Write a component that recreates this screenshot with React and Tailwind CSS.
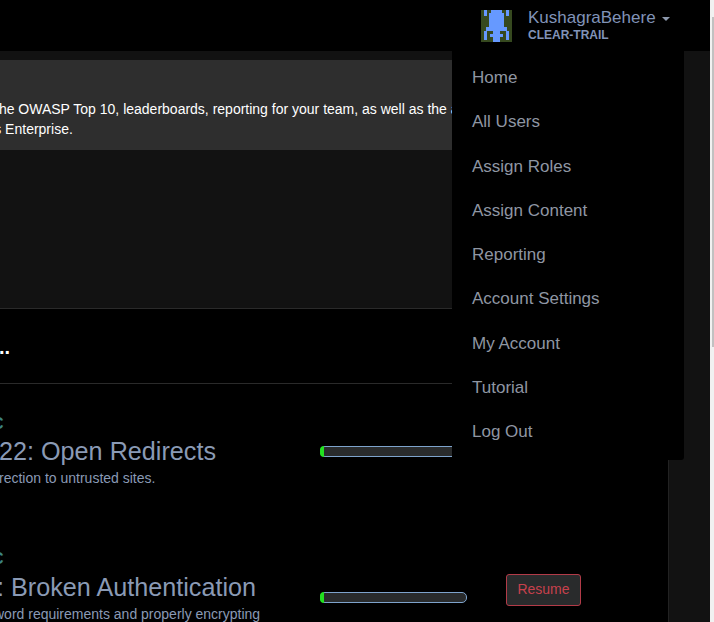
import React from 'react';

const menuItems = ['Home', 'All Users', 'Assign Roles', 'Assign Content', 'Reporting', 'Account Settings', 'My Account', 'Tutorial', 'Log Out'];

const Avatar = () => (
  <svg width="31" height="32" viewBox="0 0 31 32" shapeRendering="crispEdges">
    <rect width="31" height="32" fill="#36491f" />
    <g fill="#6699ff">
      <rect x="3" y="0" width="3" height="6" />
      <rect x="25" y="0" width="3" height="6" />
      <rect x="10" y="0" width="11" height="3" />
      <rect x="8" y="3" width="15" height="14" />
      <rect x="5" y="17" width="21" height="4" />
      <rect x="12" y="21" width="7" height="11" />
      <rect x="3" y="21" width="3" height="9" />
      <rect x="25" y="21" width="3" height="9" />
      <rect x="9" y="24" width="13" height="3" />
    </g>
  </svg>
);

const ProgressBar = () => (
  <div className="relative h-[11px] w-[147px] rounded-[5px] border border-[#7ea3cc] bg-[#292b2c]">
    <div className="absolute -bottom-px -left-px -top-px w-[4px] rounded-l-[5px] bg-[#22e01f]" />
  </div>
);

const Row = ({ title, desc, titleClass, descMl, barMt, button }) => (
  <div className="flex h-[135px] shrink-0 items-start overflow-hidden">
    <div className="w-[320px] shrink-0 overflow-hidden whitespace-nowrap pt-[32px]">
      <div className="-ml-[8px] h-[16px] text-[16px] font-bold leading-[16px] text-[#3c8583]">C</div>
      <div className={`text-[25.2px] leading-[36px] text-[#8a9ab5] ${titleClass}`}>{title}</div>
      <div className={`text-[14px] leading-[18px] text-[#8a9ab5] ${descMl}`}>{desc}</div>
    </div>
    <div className={`shrink-0 ${barMt}`}>
      <ProgressBar />
    </div>
    {button && (
      <button className="ml-[39px] mt-[55px] h-[32px] w-[75px] shrink-0 rounded-[3px] border border-[#b23b48] bg-[#292b2c] pb-[2px] text-[14px] text-[#c7414c]">
        Resume
      </button>
    )}
  </div>
);

export default function App() {
  return (
    <div className="relative flex h-[622px] w-[714px] overflow-hidden bg-[#121212] font-['Liberation_Sans',sans-serif]">
      <div className="flex w-[710px] flex-col">
        {/* top bar */}
        <header className="flex h-[51px] shrink-0 items-center bg-black pl-[481px]">
          <Avatar />
          <div className="ml-[16px] mt-[-2px]">
            <div className="flex items-center text-[17px] leading-[20px] text-[#8093b8]">
              KushagraBehere
              <span className="ml-[6px] mt-[2px] border-x-[4px] border-t-[4px] border-x-transparent border-t-[#8d99ae]" />
            </div>
            <div className="text-[12px] font-bold leading-[14px] text-[#8093b8]">CLEAR-TRAIL</div>
          </div>
        </header>

        <div className="flex flex-1">
          <main className="flex w-[669px] shrink-0 flex-col overflow-hidden border-r border-[#222] bg-black">
            <section className="h-[258px] shrink-0 border-b border-[#2a2a2a] bg-[#121212] pt-[9px]">
              <div className="h-[90px] overflow-hidden whitespace-nowrap bg-[#2e2e2e] pt-[39px] text-[14px] leading-[20px] text-white">
                <p className="-ml-[5px]">the OWASP Top 10, leaderboards, reporting for your team, as well as the ability</p>
                <p className="-ml-[40px]">Teams Enterprise.</p>
              </div>
            </section>
            <div className="flex h-[75px] shrink-0 items-center overflow-hidden border-b border-[#2a2a2a] text-[20px] font-bold text-white">
              <span className="-ml-[1px] mt-[2px] leading-[30px]">..</span>
            </div>
            <Row title="22: Open Redirects" desc="rection to untrusted sites." titleClass="-ml-[1px] mt-[1px]" descMl="-ml-[1px]" barMt="mt-[62px]" />
            <Row title=": Broken Authentication" desc="word requirements and properly encrypting" titleClass="-ml-[3px] mt-[2px]" descMl="-ml-[6px]" barMt="mt-[73px]" button />
          </main>
          <div className="flex-1" />
        </div>
      </div>

      {/* scrollbar */}
      <div className="flex h-full w-[4px] justify-end bg-[#f1f1f1]">
        <div className="mt-[17px] h-[330px] w-[2px] bg-[#c1c1c1]" />
      </div>

      {/* user dropdown */}
      <nav className="absolute left-[452px] top-[51px] flex h-[409px] w-[232px] flex-col rounded-b-[3px] bg-black pl-[20px] pt-[4.75px]">
        {menuItems.map(item => (
          <a key={item} className="flex h-[44.25px] shrink-0 items-center text-[17px] text-[#8f96a3]">
            {item}
          </a>
        ))}
      </nav>
    </div>
  );
}
